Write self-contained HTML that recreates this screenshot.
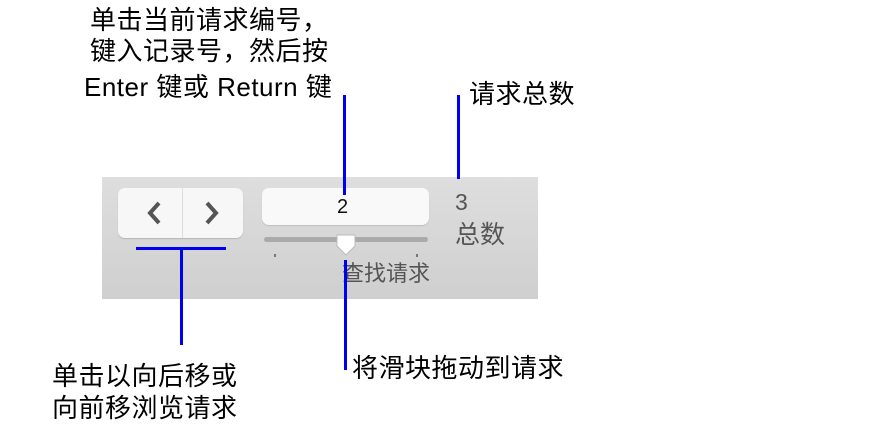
<!DOCTYPE html>
<html><head><meta charset="utf-8"><style>
body{margin:0;width:869px;height:434px;background:#fff;position:relative;overflow:hidden;font-family:"Liberation Sans","Noto Sans CJK SC",sans-serif;}
.t{position:absolute;font-size:26px;color:#000;white-space:nowrap;line-height:1;letter-spacing:0.5px;}
.bl{position:absolute;background:#0000f0;}
.tb{position:absolute;left:102px;top:177px;width:436px;height:122px;background:linear-gradient(#dedede,#cfcfcf);}
.g{position:absolute;color:#555;white-space:nowrap;line-height:1;}
</style></head><body>
<div class="t" style="left:90px;top:7px">单击当前请求编号，</div>
<div class="t" style="left:90px;top:38px">键入记录号，然后按</div>
<div class="t" style="left:84px;top:74px">Enter 键或 Return 键</div>
<div class="t" style="left:469px;top:81px">请求总数</div>
<div class="t" style="left:52px;top:363px">单击以向后移或</div>
<div class="t" style="left:52px;top:395px">向前移浏览请求</div>
<div class="t" style="left:352px;top:355px">将滑块拖动到请求</div>

<div class="tb">
 <div style="position:absolute;left:16px;top:11px;width:125px;height:50px;background:#f7f7f7;border-radius:7px;box-shadow:0 1px 1px rgba(0,0,0,.15)"></div>
 <div style="position:absolute;left:80px;top:11px;width:1px;height:50px;background:#ddd"></div>
 <svg style="position:absolute;left:16px;top:11px" width="125" height="50"><path d="M41 15 L32 25 L41 35" stroke="#555" stroke-width="4" fill="none"/><path d="M89 15 L98 25 L89 35" stroke="#555" stroke-width="4" fill="none"/></svg>
 <div style="position:absolute;left:160px;top:11px;width:167px;height:37px;background:#f9f9f9;border-radius:7px;box-shadow:0 1px 1px rgba(0,0,0,.12)"></div>
 <div class="g" style="left:235px;top:20px;font-size:20px;color:#111">2</div>
 <div style="position:absolute;left:162px;top:60px;width:164px;height:5px;border-radius:3px;background:#aaa"></div>
 <svg style="position:absolute;left:232px;top:57px" width="24" height="24"><path d="M3 1 H21 V12 L12 21 L3 12 Z" fill="#fff" stroke="#bbb" stroke-width="1"/></svg>
 <div style="position:absolute;left:172px;top:77px;width:2px;height:3px;background:#777"></div>
 <div style="position:absolute;left:314px;top:77px;width:2px;height:3px;background:#777"></div>
 <div class="g" style="left:240px;top:86px;font-size:22px">查找请求</div>
 <div class="g" style="left:353px;top:14px;font-size:23px">3</div>
 <div class="g" style="left:353px;top:46px;font-size:25px">总数</div>
</div>

<div class="bl" style="left:343px;top:95px;width:3px;height:100px"></div>
<div class="bl" style="left:457px;top:95px;width:3px;height:84px"></div>
<div class="bl" style="left:136px;top:247px;width:90px;height:3px"></div>
<div class="bl" style="left:180px;top:247px;width:3px;height:98px"></div>
<div class="bl" style="left:344px;top:260px;width:3px;height:110px"></div>
</body></html>
